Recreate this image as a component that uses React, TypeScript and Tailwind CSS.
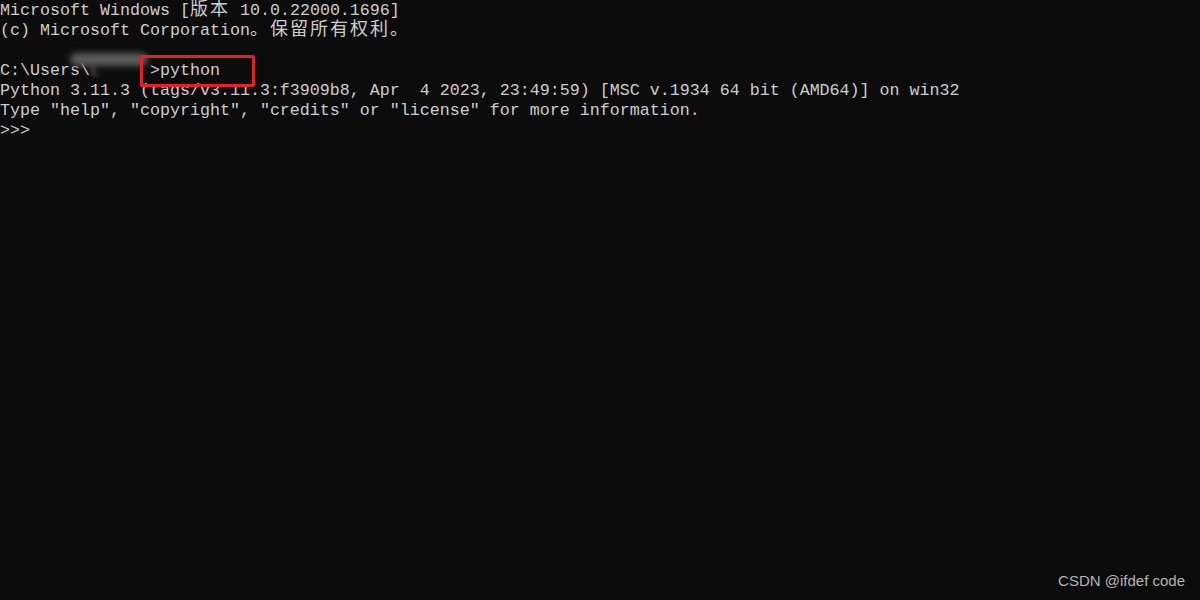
import React from 'react';

const mono = { fontFamily: '"Liberation Mono", monospace' };

// CJK glyphs are double width in the console: 20px per char
function Cjk({ children }: { children: React.ReactNode }) {
  return (
    <span className="text-[18px] leading-[0] tracking-[2px] font-['Noto_Sans_CJK_SC',sans-serif]">
      {children}
    </span>
  );
}

export default function App() {
  return (
    <div className="w-full h-[600px] bg-[#0c0c0c] text-[#cccccc] flex flex-col overflow-hidden">
      <div
        className="text-[16.667px] leading-[20px] whitespace-pre font-['Liberation_Mono',monospace]"
        style={mono}
      >
        <div className="h-[20px] pt-[1px]">
          Microsoft Windows [<Cjk>版本</Cjk> 10.0.22000.1696]
        </div>
        <div className="h-[20px] pt-[1px]">
          (c) Microsoft Corporation<Cjk>。保留所有权利。</Cjk>
        </div>
        <div className="h-[20px]">&nbsp;</div>
        <div className="relative h-[20px] pt-[1px]">
          C:\Users\<span className="blur-[2px] text-[#777]">L     </span>&gt;python
          {/* smudged username */}
          <span className="absolute left-[70px] top-[-7px] w-[78px] h-[13px] rounded-full bg-[#5c5c5c] blur-[3px]" />
          {/* red highlight box */}
          <span className="absolute left-[140px] top-[-5px] w-[115px] h-[32px] border-[3px] border-[#e3212b] rounded-[2px]" />
        </div>
        <div className="h-[20px] pt-[1px]">
          Python 3.11.3 (tags/v3.11.3:f3909b8, Apr  4 2023, 23:49:59) [MSC v.1934 64 bit (AMD64)] on win32
        </div>
        <div className="h-[20px] pt-[1px]">
          Type "help", "copyright", "credits" or "license" for more information.
        </div>
        <div className="h-[20px] pt-[1px]">&gt;&gt;&gt;</div>
      </div>

      <div className="mt-auto self-end pr-[15px] pb-[8px] text-[15px] text-[#b4b4b4] font-['Liberation_Sans',sans-serif]">
        CSDN @ifdef code
      </div>
    </div>
  );
}
